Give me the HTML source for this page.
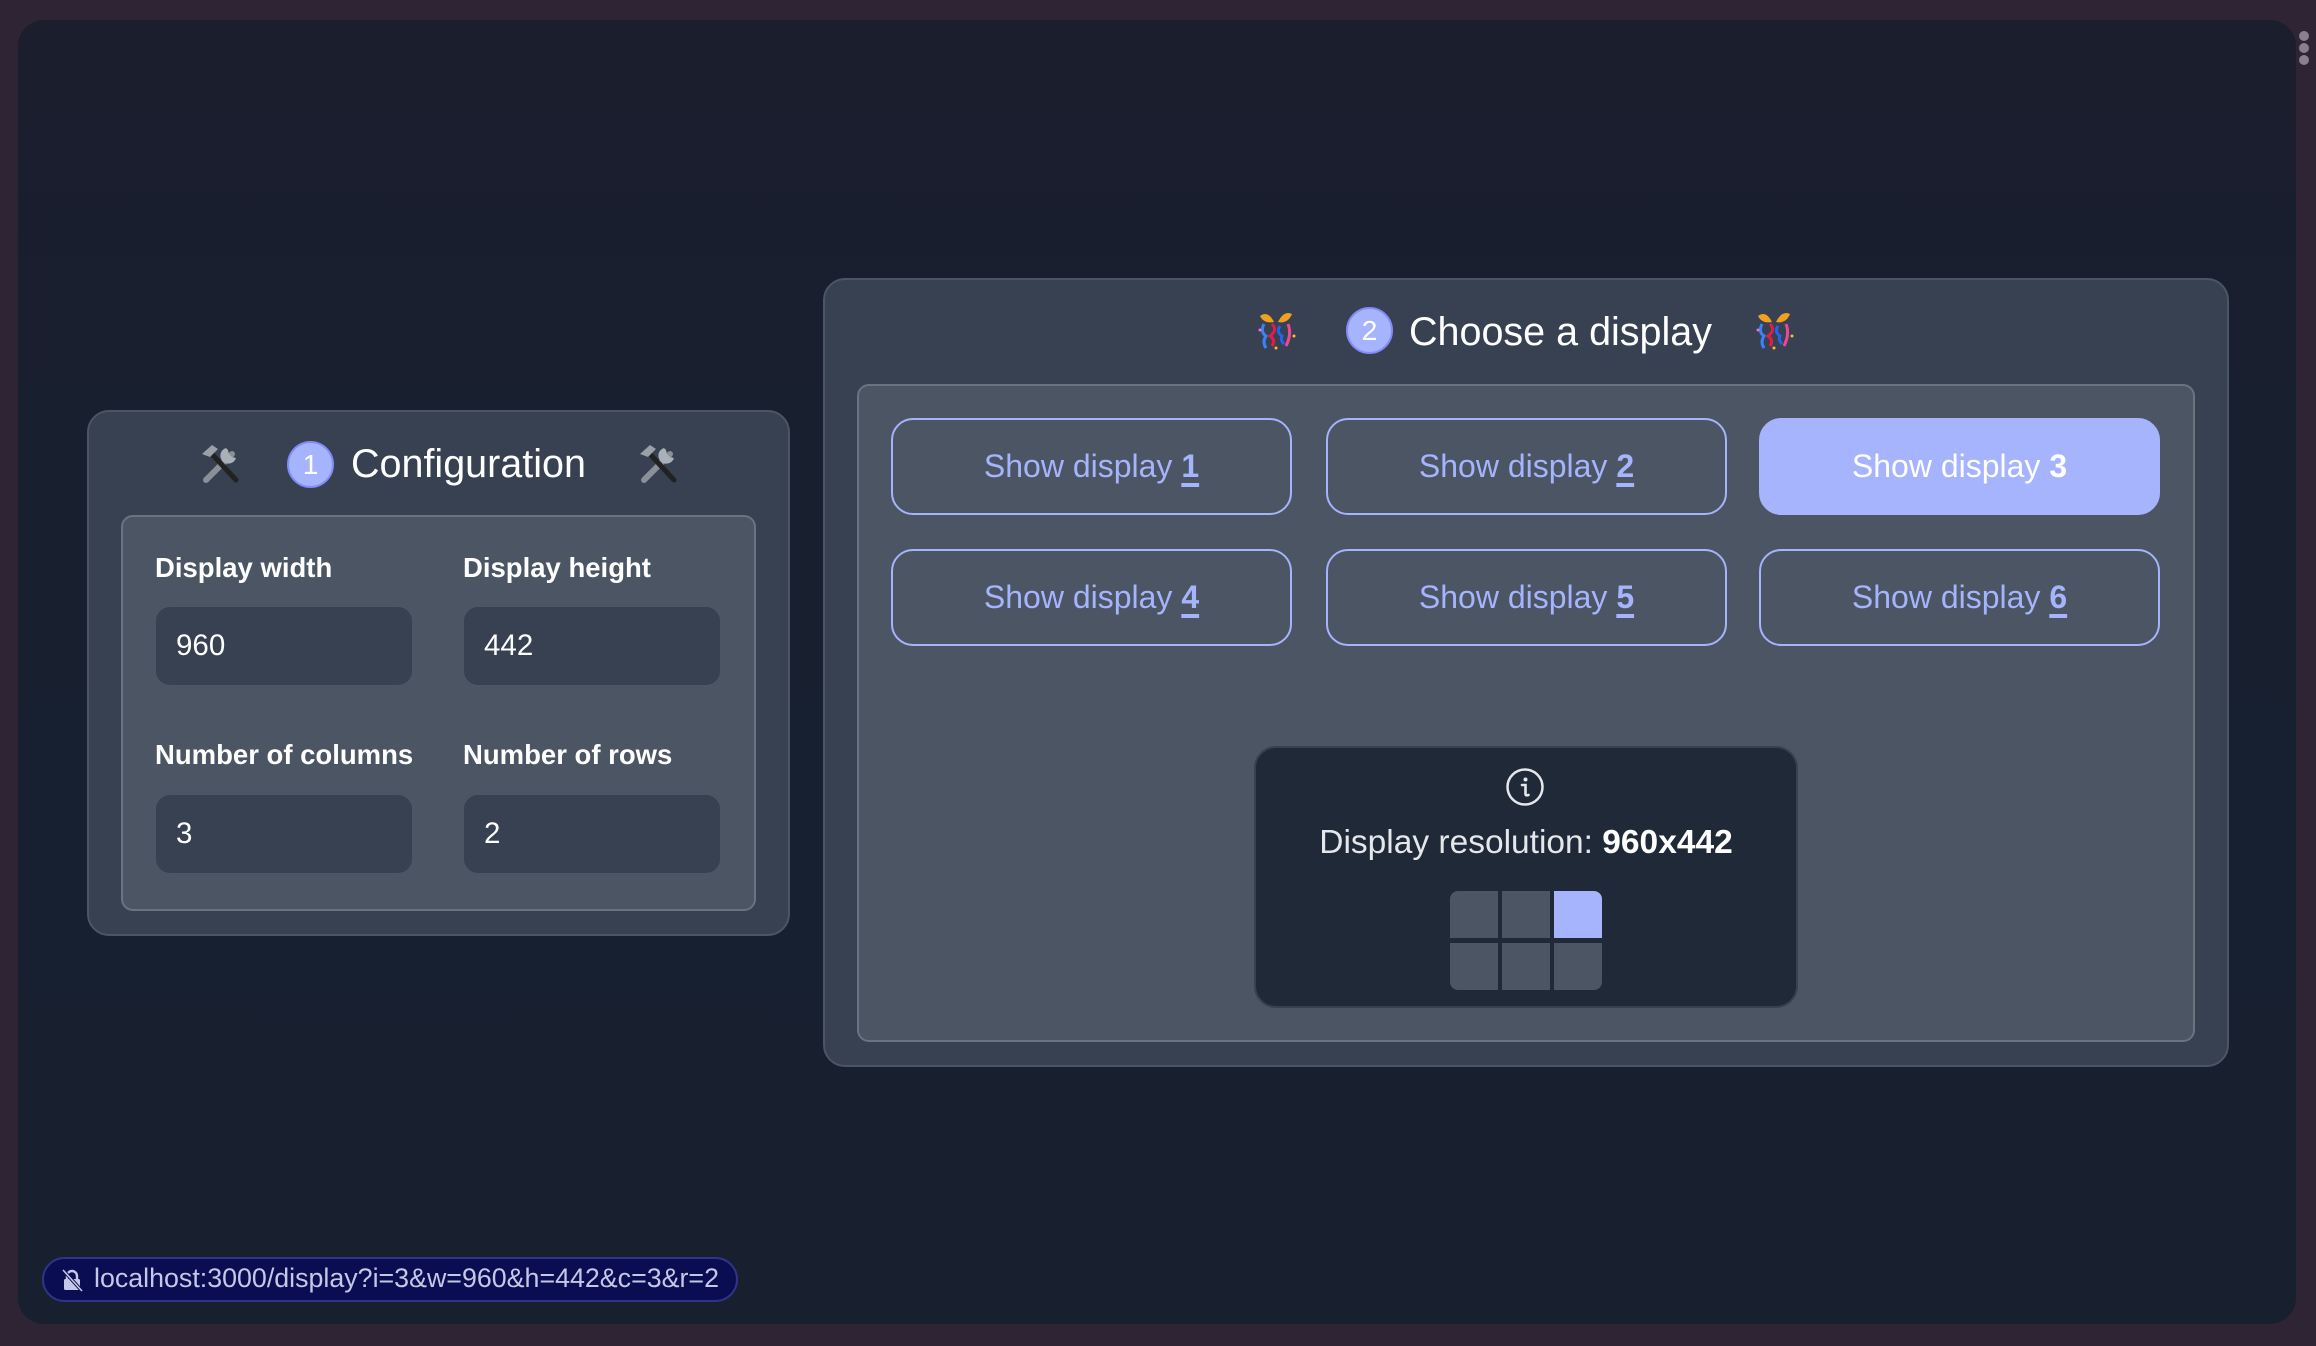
<!DOCTYPE html>
<html><head><meta charset="utf-8"><style>
*{box-sizing:border-box;margin:0;padding:0}
body{width:2316px;height:1346px;background:#2e2433;position:relative;overflow:hidden;font-family:"Liberation Sans",sans-serif}
.win{position:absolute;left:18px;top:20px;width:2278px;height:1304px;border-radius:26px;background:linear-gradient(180deg,#1a1e2d,#172030 60%,#182030);}
.abs{position:absolute}
.panel{position:absolute;background:#374151;border:2px solid #4b5563;border-radius:22px}
.inner{position:absolute;background:#4b5563;border:2px solid #6b7280;border-radius:12px}
.badge{position:absolute;width:47px;height:47px;border-radius:50%;background:#a5b4fc;border:2px solid #818cf8;color:#fff;font-size:28px;display:flex;align-items:center;justify-content:center}
.title{position:absolute;color:#fff;font-size:39.5px;line-height:46px;white-space:nowrap}
.lbl{position:absolute;color:#fff;font-size:27.5px;font-weight:bold;white-space:nowrap}
.inp{position:absolute;width:256px;height:78px;background:#374151;border-radius:14px;color:#fff;font-size:29.5px;line-height:78px;padding-left:20px}
.btn{position:absolute;width:401px;height:97px;border:2px solid #a5b4fc;border-radius:22px;color:#a5b4fc;font-size:32px;display:flex;align-items:center;justify-content:center;white-space:pre}
.btn b{text-decoration:underline;text-decoration-thickness:4px;text-underline-offset:6px}
.btn.on{background:#a5b4fc;color:#fff}
.btn.on b{text-decoration:none}
.cell{position:absolute;width:48px;height:47px;background:#4b5563}
</style></head><body>
<div class="win"></div>
<div class="abs" style="left:2299px;top:31px;width:10px;height:10px;border-radius:50%;background:#8a7f90"></div>
<div class="abs" style="left:2299px;top:43px;width:10px;height:10px;border-radius:50%;background:#8a7f90"></div>
<div class="abs" style="left:2299px;top:55px;width:10px;height:10px;border-radius:50%;background:#8a7f90"></div>

<div class="panel" style="left:87px;top:410px;width:703px;height:526px"></div>
<svg class="abs" style="left:198px;top:442px" width="44" height="44" viewBox="0 0 44 44">
<line x1="8" y1="38" x2="34" y2="12" stroke="#8a8f98" stroke-width="6" stroke-linecap="round"/>
<path d="M28 6 a8 8 0 1 0 10 10 l-4 -1 -3 -3 -1 -4z" fill="#aab0b8"/>
<line x1="12" y1="10" x2="38" y2="38" stroke="#222" stroke-width="5" stroke-linecap="round"/>
<path d="M4 12 l10 -9 l6 4 l-8 8z" fill="#9aa0a8"/>
</svg>
<div class="badge" style="left:287px;top:441px">1</div>
<div class="title" style="left:351px;top:441px">Configuration</div>
<svg class="abs" style="left:636px;top:442px" width="44" height="44" viewBox="0 0 44 44">
<line x1="8" y1="38" x2="34" y2="12" stroke="#8a8f98" stroke-width="6" stroke-linecap="round"/>
<path d="M28 6 a8 8 0 1 0 10 10 l-4 -1 -3 -3 -1 -4z" fill="#aab0b8"/>
<line x1="12" y1="10" x2="38" y2="38" stroke="#222" stroke-width="5" stroke-linecap="round"/>
<path d="M4 12 l10 -9 l6 4 l-8 8z" fill="#9aa0a8"/>
</svg>
<div class="inner" style="left:121px;top:515px;width:635px;height:396px"></div>
<div class="lbl" style="left:155px;top:552px">Display width</div>
<div class="lbl" style="left:463px;top:552px">Display height</div>
<div class="inp" style="left:156px;top:607px">960</div>
<div class="inp" style="left:464px;top:607px">442</div>
<div class="lbl" style="left:155px;top:739px">Number of columns</div>
<div class="lbl" style="left:463px;top:739px">Number of rows</div>
<div class="inp" style="left:156px;top:795px">3</div>
<div class="inp" style="left:464px;top:795px">2</div>

<div class="panel" style="left:823px;top:278px;width:1406px;height:789px"></div>
<svg class="abs" style="left:1254px;top:310px" width="44" height="42" viewBox="0 0 44 42">
<path d="M6 6 q8 -6 14 6 q-10 2 -14 -6z M38 4 q-8 -4 -14 8 q10 2 14 -8z" fill="#f0a020"/>
<path d="M10 14 q-4 8 2 12 q-4 6 0 12" stroke="#3b82f6" stroke-width="3" fill="none"/>
<path d="M18 14 q6 6 -2 12 q6 4 2 10" stroke="#e11d48" stroke-width="3" fill="none"/>
<path d="M26 16 q-4 6 2 10 q-2 4 2 8" stroke="#2563eb" stroke-width="3" fill="none"/>
<path d="M34 14 q4 10 -2 22" stroke="#ec4899" stroke-width="3" fill="none"/>
<circle cx="6" cy="20" r="1.5" fill="#f472b6"/><circle cx="40" cy="26" r="1.5" fill="#fbbf24"/><circle cx="22" cy="38" r="1.5" fill="#fbbf24"/>
</svg>
<div class="badge" style="left:1346px;top:307px">2</div>
<div class="title" style="left:1409px;top:309px">Choose a display</div>
<svg class="abs" style="left:1752px;top:310px" width="44" height="42" viewBox="0 0 44 42">
<path d="M6 6 q8 -6 14 6 q-10 2 -14 -6z M38 4 q-8 -4 -14 8 q10 2 14 -8z" fill="#f0a020"/>
<path d="M10 14 q-4 8 2 12 q-4 6 0 12" stroke="#3b82f6" stroke-width="3" fill="none"/>
<path d="M18 14 q6 6 -2 12 q6 4 2 10" stroke="#e11d48" stroke-width="3" fill="none"/>
<path d="M26 16 q-4 6 2 10 q-2 4 2 8" stroke="#2563eb" stroke-width="3" fill="none"/>
<path d="M34 14 q4 10 -2 22" stroke="#ec4899" stroke-width="3" fill="none"/>
<circle cx="6" cy="20" r="1.5" fill="#f472b6"/><circle cx="40" cy="26" r="1.5" fill="#fbbf24"/><circle cx="22" cy="38" r="1.5" fill="#fbbf24"/>
</svg>
<div class="inner" style="left:857px;top:384px;width:1338px;height:658px"></div>
<div class="btn" style="left:891px;top:418px">Show display <b>1</b></div>
<div class="btn" style="left:1326px;top:418px">Show display <b>2</b></div>
<div class="btn on" style="left:1759px;top:418px">Show display <b>3</b></div>
<div class="btn" style="left:891px;top:549px">Show display <b>4</b></div>
<div class="btn" style="left:1326px;top:549px">Show display <b>5</b></div>
<div class="btn" style="left:1759px;top:549px">Show display <b>6</b></div>

<div class="abs" style="left:1254px;top:746px;width:544px;height:262px;background:#1f2937;border:2px solid #374151;border-radius:22px"></div>
<svg class="abs" style="left:1505px;top:767px" width="40" height="40" viewBox="0 0 40 40">
<circle cx="20" cy="20" r="17.5" stroke="#e5e7eb" stroke-width="2.5" fill="none"/>
<circle cx="20.5" cy="12.5" r="2" fill="#e5e7eb"/>
<path d="M17 18 h3.5 v9 q0 2 3 1" stroke="#e5e7eb" stroke-width="2.6" fill="none" stroke-linecap="round"/>
</svg>
<div class="abs" style="left:1254px;width:544px;top:824px;text-align:center;color:#e5e7eb;font-size:33.5px;white-space:nowrap">Display resolution: <b style="color:#fff">960x442</b></div>
<div class="cell" style="left:1450px;top:891px;border-top-left-radius:8px"></div>
<div class="cell" style="left:1502px;top:891px"></div>
<div class="cell" style="left:1554px;top:891px;background:#a5b4fc;border-top-right-radius:8px"></div>
<div class="cell" style="left:1450px;top:943px;border-bottom-left-radius:8px"></div>
<div class="cell" style="left:1502px;top:943px"></div>
<div class="cell" style="left:1554px;top:943px;border-bottom-right-radius:8px"></div>

<div class="abs" style="left:42px;top:1257px;width:696px;height:45px;border-radius:23px;background:#0b0d52;border:2px solid #2f3488"></div>
<svg class="abs" style="left:60px;top:1268px" width="24" height="24" viewBox="0 0 24 24">
<path d="M7 11 v-3 a5 5 0 0 1 10 0 v3" stroke="#c5c7e6" stroke-width="2.4" fill="none"/>
<rect x="4" y="11" width="16" height="11" rx="1.5" fill="#c5c7e6"/>
<line x1="3" y1="2" x2="22" y2="23" stroke="#0b0d52" stroke-width="3.5"/>
<line x1="3" y1="2" x2="22" y2="23" stroke="#c5c7e6" stroke-width="1.6"/>
</svg>
<div class="abs" style="left:94px;top:1263px;color:#c5c7e6;font-size:26.8px;line-height:30px;white-space:nowrap">localhost:3000/display?i=3&amp;w=960&amp;h=442&amp;c=3&amp;r=2</div>
</body></html>
